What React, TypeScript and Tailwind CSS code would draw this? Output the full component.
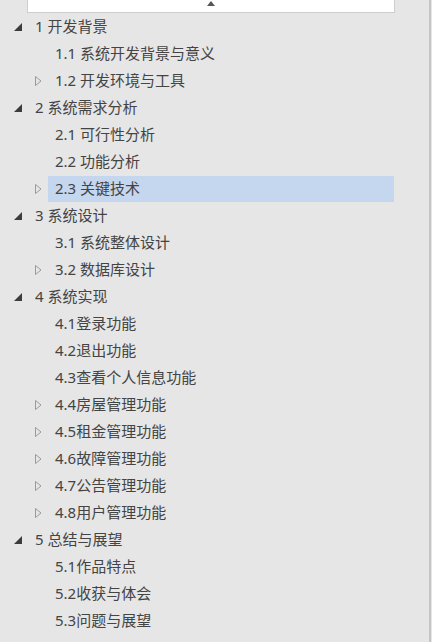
import React from "react";

type Row = { level: 1 | 2; text: string; expandable?: boolean; selected?: boolean };

const rows: Row[] = [
  { level: 1, text: "1 开发背景" },
  { level: 2, text: "1.1 系统开发背景与意义" },
  { level: 2, text: "1.2 开发环境与工具", expandable: true },
  { level: 1, text: "2 系统需求分析" },
  { level: 2, text: "2.1 可行性分析" },
  { level: 2, text: "2.2 功能分析" },
  { level: 2, text: "2.3 关键技术", expandable: true, selected: true },
  { level: 1, text: "3 系统设计" },
  { level: 2, text: "3.1 系统整体设计" },
  { level: 2, text: "3.2 数据库设计", expandable: true },
  { level: 1, text: "4 系统实现" },
  { level: 2, text: "4.1登录功能" },
  { level: 2, text: "4.2退出功能" },
  { level: 2, text: "4.3查看个人信息功能" },
  { level: 2, text: "4.4房屋管理功能", expandable: true },
  { level: 2, text: "4.5租金管理功能", expandable: true },
  { level: 2, text: "4.6故障管理功能", expandable: true },
  { level: 2, text: "4.7公告管理功能", expandable: true },
  { level: 2, text: "4.8用户管理功能", expandable: true },
  { level: 1, text: "5 总结与展望" },
  { level: 2, text: "5.1作品特点" },
  { level: 2, text: "5.2收获与体会" },
  { level: 2, text: "5.3问题与展望" },
];

function Expanded() {
  return (
    <svg width="8" height="8" viewBox="0 0 8 8" className="block">
      <polygon points="8,0 8,8 0,8" fill="#3c3c3c" />
    </svg>
  );
}

function Collapsed() {
  return (
    <svg width="7" height="10" viewBox="0 0 7 10" className="block">
      <polygon points="0.5,0.5 6,5 0.5,9.5" fill="none" stroke="#9a9a9a" strokeWidth="1" />
    </svg>
  );
}

export default function App() {
  return (
    <div
      className="relative w-[432px] h-[642px] bg-[#e6e6e6] overflow-hidden text-[#444444]"
      style={{ fontFamily: '"Noto Sans", "Noto Sans CJK SC", sans-serif' }}
    >
      <div className="ml-[27px] w-[368px] h-[13px] bg-white border border-t-0 border-[#cdcdcd] flex justify-center">
        <svg width="8" height="5" viewBox="0 0 8 5" className="mt-[1px]">
          <polygon points="4,0 8,5 0,5" fill="#555" />
        </svg>
      </div>
      <div className="flex flex-col">
        {rows.map((r, i) =>
          r.level === 1 ? (
            <div key={i} className="h-[27px] flex items-center">
              <div className="w-[35px] pl-[14px] flex items-center">
                <Expanded />
              </div>
              <span className="text-[15px] leading-none">{r.text}</span>
            </div>
          ) : (
            <div key={i} className="h-[27px] flex items-center pl-[35px]">
              <div className="w-[13px] flex items-center">{r.expandable ? <Collapsed /> : null}</div>
              <div
                className={`w-[346px] h-[26px] flex items-center pl-[7px] ${
                  r.selected ? "bg-[#c5d6ef]" : ""
                }`}
              >
                <span className="text-[15px] leading-none">{r.text}</span>
              </div>
            </div>
          )
        )}
      </div>
      <div className="absolute top-0 right-[1px] w-[2px] h-full bg-[#c4c4c4]" />
    </div>
  );
}
